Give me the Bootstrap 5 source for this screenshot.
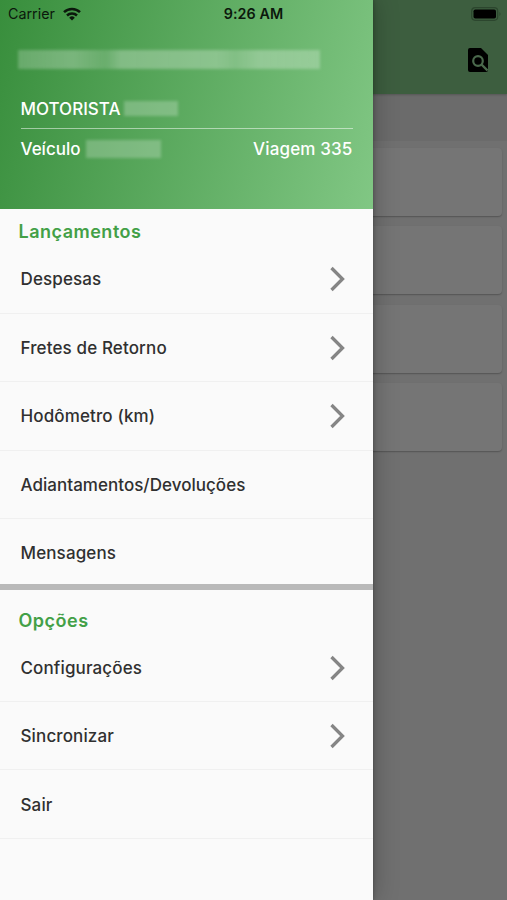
<!DOCTYPE html>
<html lang="pt-BR">
<head>
<meta charset="utf-8">
<meta name="viewport" content="width=device-width, initial-scale=1">
<title>Menu do motorista</title>
<link href="https://cdn.jsdelivr.net/npm/bootstrap@5.3.0/dist/css/bootstrap.min.css" rel="stylesheet">
<style>
body{font-family:Inter,"Liberation Sans",sans-serif;color:#303030}
.screen{width:507px;height:900px;background:#707070}
.appbar{height:94px;background:#3d5e3f;padding:0 18px 21px 0;box-shadow:0 1px 2px rgba(0,0,0,.2)}
.filter-strip{height:47px;background:#6b6b6b}
.trip-list{padding:7px 5px 0;gap:10.3px}
.trip-card{height:68px;background:#757575;border-radius:4px;box-shadow:0 1px 1.5px rgba(0,0,0,.25)}
.drawer{width:372.5px;background:#fafafa;box-shadow:0 0 24px rgba(0,0,0,.28),0 0 4px rgba(0,0,0,.3)}
.drawer-head{height:208.5px;padding:48px 20px 0 20.5px;background:linear-gradient(104deg,#388e3c 0%,#81c784 100%);font-size:17px;font-weight:500;line-height:24px}
.redacted{background:rgba(255,255,255,.24);filter:blur(1.5px)}
.redacted-name{width:302px;height:19px;margin-left:-3px;margin-top:2px;background:linear-gradient(90deg,rgba(255,255,255,.22),rgba(255,255,255,.28) 18%,rgba(255,255,255,.16) 29%,rgba(255,255,255,.29) 34%,rgba(255,255,255,.28) 66%,rgba(255,255,255,.2) 72%,rgba(255,255,255,.29) 80%,rgba(255,255,255,.26))}
.redacted-driver{width:54px;height:15px;margin-left:4px}
.redacted-plate{width:75px;height:18px;margin-left:5px}
.driver-line{margin-top:28px;height:32px;padding-bottom:7.5px;border-bottom:1px solid rgba(255,255,255,.5)}
.vehicle-line{margin-top:8px}
.trip-no{letter-spacing:.15px}
.section-title{color:#43a047;font-size:18px;font-weight:600;letter-spacing:.5px;line-height:24px;margin:0;padding-left:18.5px}
.title-first{height:37px;padding-top:11px}
.title-second{height:43.5px;padding-top:19px}
.menu-item{height:68.4px;padding:2px 27px 0 20.5px;font-size:17px;font-weight:500;letter-spacing:.13px;border-bottom:1px solid #f0f0f0;color:#303030}
.menu-item svg{margin-top:-2px}
.item-long{letter-spacing:.03px}
.section-end{height:70.9px;padding-top:4.5px;border-bottom:6px solid #b9b9b9}
.options .menu-item{padding-top:3px}
.status{height:27px;color:#0b180c;font-size:14.3px}
.clock{margin-left:-2px;margin-right:2px;letter-spacing:.1px}
</style>
<script src="https://cdn.jsdelivr.net/npm/bootstrap@5.3.0/dist/js/bootstrap.bundle.min.js"></script>
</head>
<body>
<div class="screen position-relative overflow-hidden">
  <main>
    <header class="appbar d-flex justify-content-end align-items-end position-relative">
      <svg width="22" height="26" viewBox="0 0 22 26"><path d="M3 1h11l7 7v15q0 2-2 2H3q-2 0-2-2V3q0-2 2-2z" fill="#000"/><circle cx="11" cy="14" r="4.8" fill="none" stroke="#4a694c" stroke-width="2.2"/><path d="m14.5 17.5 6 6" stroke="#4a694c" stroke-width="2.4"/></svg>
    </header>
    <div class="filter-strip"></div>
    <div class="trip-list d-flex flex-column">
      <div class="trip-card"></div><div class="trip-card"></div><div class="trip-card"></div><div class="trip-card"></div>
    </div>
  </main>

  <aside class="drawer position-absolute top-0 start-0 h-100">
    <div class="drawer-head text-white">
      <div class="redacted redacted-name"></div>
      <div class="driver-line d-flex align-items-center"><span>MOTORISTA</span><span class="redacted redacted-driver"></span></div>
      <div class="vehicle-line d-flex align-items-center"><span>Veículo</span><span class="redacted redacted-plate"></span><span class="trip-no ms-auto">Viagem 335</span></div>
    </div>
    <h2 class="section-title title-first">Lançamentos</h2>
    <nav>
      <a class="menu-item d-flex align-items-center justify-content-between text-decoration-none">Despesas<svg width="17" height="26" viewBox="0 0 17 26"><path d="m2.5 2 11 11-11 11" fill="none" stroke="#858585" stroke-width="3.3"/></svg></a>
      <a class="menu-item d-flex align-items-center justify-content-between text-decoration-none">Fretes de Retorno<svg width="17" height="26" viewBox="0 0 17 26"><path d="m2.5 2 11 11-11 11" fill="none" stroke="#858585" stroke-width="3.3"/></svg></a>
      <a class="menu-item d-flex align-items-center justify-content-between text-decoration-none">Hodômetro (km)<svg width="17" height="26" viewBox="0 0 17 26"><path d="m2.5 2 11 11-11 11" fill="none" stroke="#858585" stroke-width="3.3"/></svg></a>
      <a class="menu-item item-long d-flex align-items-center text-decoration-none">Adiantamentos/Devoluções</a>
      <a class="menu-item section-end d-flex align-items-center text-decoration-none">Mensagens</a>
    </nav>
    <h2 class="section-title title-second">Opções</h2>
    <nav class="options">
      <a class="menu-item d-flex align-items-center justify-content-between text-decoration-none">Configurações<svg width="17" height="26" viewBox="0 0 17 26"><path d="m2.5 2 11 11-11 11" fill="none" stroke="#858585" stroke-width="3.3"/></svg></a>
      <a class="menu-item d-flex align-items-center justify-content-between text-decoration-none">Sincronizar<svg width="17" height="26" viewBox="0 0 17 26"><path d="m2.5 2 11 11-11 11" fill="none" stroke="#858585" stroke-width="3.3"/></svg></a>
      <a class="menu-item d-flex align-items-center text-decoration-none">Sair</a>
    </nav>
  </aside>

  <div class="status position-absolute top-0 start-0 w-100 row g-0 align-items-center">
    <div class="col d-flex align-items-center ps-2"><span class="me-1">Carrier</span>
      <svg class="ms-1" width="18" height="14" viewBox="0 0 18 14" fill="none" stroke="#0b180c" stroke-width="2.5"><path d="M1 5.2a11.5 11.5 0 0 1 16 0M4 8.5a7.2 7.2 0 0 1 10 0"/><path d="M9 13.5 6.2 10.7a4 4 0 0 1 5.6 0z" fill="#0b180c" stroke="none"/></svg></div>
    <div class="col text-center fw-semibold clock">9:26 AM</div>
    <div class="col d-flex justify-content-end pe-1"><svg width="32" height="14" viewBox="0 0 32 14"><rect x=".7" y=".7" width="26" height="12.6" rx="3.5" fill="none" stroke="#2c462e" stroke-width="1.2"/><rect x="2.5" y="2.5" width="22.5" height="9" rx="1.8" fill="#000"/><path d="M28.5 5q2 2 0 4z" fill="#2c462e"/></svg></div>
  </div>
</div>
</body>
</html>
